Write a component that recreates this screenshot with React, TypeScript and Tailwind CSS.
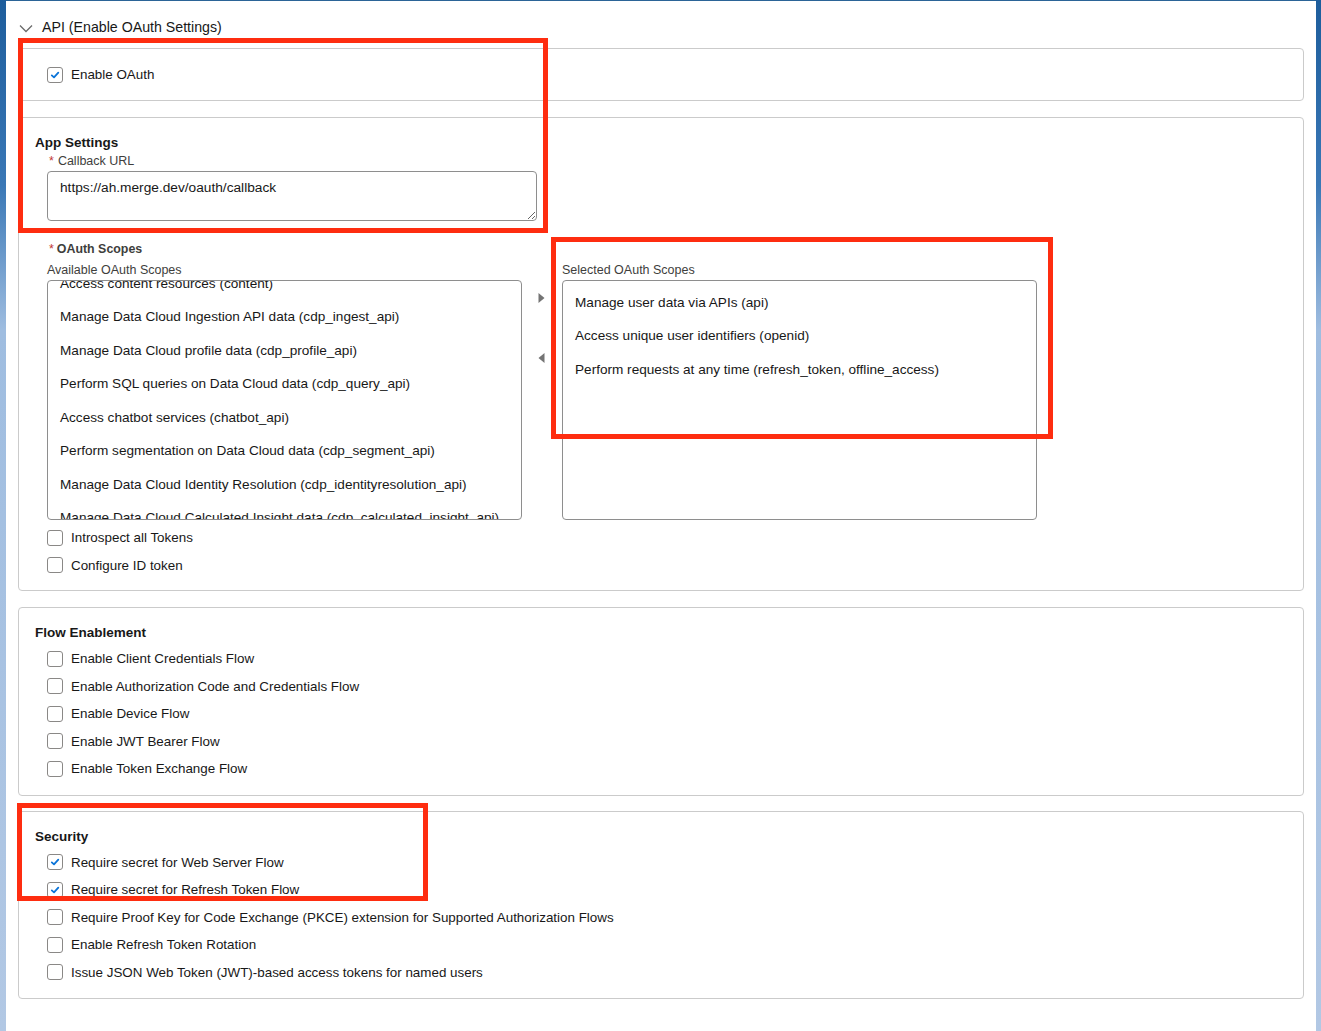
import React from "react";

const font = { fontFamily: '"Liberation Sans", Arial, sans-serif' };

function Check({ checked = false, label }: { checked?: boolean; label: string }) {
  return (
    <div className="flex items-center h-[27.5px] gap-2">
      <span className="w-4 h-4 rounded-[3px] border border-[#8a8886] bg-white flex items-center justify-center shrink-0">
        {checked && (
          <svg width="10" height="10" viewBox="0 0 10 10">
            <path d="M1.8 5.4 L4 7.4 L8.3 2.6" fill="none" stroke="#0b74d8" strokeWidth="1.8" strokeLinecap="round" strokeLinejoin="round" />
          </svg>
        )}
      </span>
      <span className="text-[13.4px] text-[#181818] leading-none whitespace-nowrap">{label}</span>
    </div>
  );
}

function Box({ children, className = "" }: { children: React.ReactNode; className?: string }) {
  return (
    <div className={"mx-3 border border-[#cbcbcb] rounded-[4px] bg-white " + className}>{children}</div>
  );
}

const available = [
  "Access content resources (content)",
  "Manage Data Cloud Ingestion API data (cdp_ingest_api)",
  "Manage Data Cloud profile data (cdp_profile_api)",
  "Perform SQL queries on Data Cloud data (cdp_query_api)",
  "Access chatbot services (chatbot_api)",
  "Perform segmentation on Data Cloud data (cdp_segment_api)",
  "Manage Data Cloud Identity Resolution (cdp_identityresolution_api)",
  "Manage Data Cloud Calculated Insight data (cdp_calculated_insight_api)",
];

const selected = [
  "Manage user data via APIs (api)",
  "Access unique user identifiers (openid)",
  "Perform requests at any time (refresh_token, offline_access)",
];

export default function App() {
  return (
    <div
      className="relative w-[1321px] h-[1031px] overflow-hidden flex bg-[linear-gradient(180deg,#1d5d9c_0%,#3a78b6_18%,#9fbde0_32%,#b2c8e4_100%)]"
      style={font}
    >
      <div className="ml-[6px] w-[1310px] h-full bg-white border-t border-[#2b6497] pt-[17px]">
        {/* header */}
        <div className="flex items-center h-5 pl-[13px] gap-[9px]">
          <svg width="14" height="9" viewBox="0 0 14 9">
            <path d="M1 1.5 L7 7.5 L13 1.5" fill="none" stroke="#6b6b6b" strokeWidth="1.3" />
          </svg>
          <span className="text-[14.2px] text-[#181818]">API (Enable OAuth Settings)</span>
        </div>

        {/* Box 1 */}
        <Box className="mt-[10px] h-[53px] flex items-center pl-[28px]">
          <Check checked label="Enable OAuth" />
        </Box>

        {/* Box 2 */}
        <Box className="mt-4 pt-[16px] pl-4 pb-[11px]">
          <div className="text-[13.5px] font-bold text-[#181818] leading-[18px]">App Settings</div>
          <div className="mt-[1px] pl-[14px] text-[12.5px] leading-4 text-[#3e3e3c] flex">
            <span className="text-[#c23934] mr-[4px]">*</span>Callback URL
          </div>
          <textarea
            readOnly
            defaultValue="https://ah.merge.dev/oauth/callback"
            className="mt-[2px] ml-3 block w-[490px] h-[50px] border border-[#8e8e8e] rounded-[4px] px-3 pt-[7px] text-[13.7px] leading-[18px] text-[#181818] outline-none"
            style={font}
          />
          <div className="mt-[20px] pl-[14px] text-[12.4px] leading-4 font-bold text-[#3e3e3c] flex">
            <span className="text-[#c23934] mr-[3px] font-normal">*</span>OAuth Scopes
          </div>
          <div className="mt-[5px] flex pl-3">
            <div>
              <div className="text-[12.5px] leading-4 text-[#3e3e3c]">Available OAuth Scopes</div>
              <div className="mt-[2px] w-[475px] h-[240px] border border-[#8e8e8e] rounded-[4px] overflow-hidden">
                <div className="-mt-[14px]">
                  {available.map((t) => (
                    <div key={t} className="h-[33.5px] flex items-center pl-3 text-[13.6px] text-[#181818] whitespace-nowrap">
                      {t}
                    </div>
                  ))}
                </div>
              </div>
            </div>
            <div className="w-[40px] flex flex-col items-center pt-[31px]">
              <svg width="7" height="10" viewBox="0 0 7 10" className="-ml-[1px]">
                <path d="M0.5 0 L6.5 5 L0.5 10 Z" fill="#747474" />
              </svg>
              <svg width="7" height="10" viewBox="0 0 7 10" className="mt-[50px] -ml-[1px]">
                <path d="M6.5 0 L0.5 5 L6.5 10 Z" fill="#747474" />
              </svg>
            </div>
            <div>
              <div className="text-[12.5px] leading-4 text-[#3e3e3c]">Selected OAuth Scopes</div>
              <div className="mt-[2px] w-[475px] h-[240px] border border-[#8e8e8e] rounded-[4px] overflow-hidden pt-[5px]">
                {selected.map((t) => (
                  <div key={t} className="h-[33.5px] flex items-center pl-3 text-[13.6px] text-[#181818] whitespace-nowrap">
                    {t}
                  </div>
                ))}
              </div>
            </div>
          </div>
          <div className="mt-[4px] pl-3">
            <Check label="Introspect all Tokens" />
            <Check label="Configure ID token" />
          </div>
        </Box>

        {/* Box 3 */}
        <Box className="mt-4 pt-[16px] pl-4 pb-[12px]">
          <div className="text-[13.5px] font-bold text-[#181818] leading-[18px]">Flow Enablement</div>
          <div className="mt-[3px] pl-3">
            <Check label="Enable Client Credentials Flow" />
            <Check label="Enable Authorization Code and Credentials Flow" />
            <Check label="Enable Device Flow" />
            <Check label="Enable JWT Bearer Flow" />
            <Check label="Enable Token Exchange Flow" />
          </div>
        </Box>

        {/* Box 4 */}
        <Box className="mt-[15px] pt-[16px] pl-4 pb-[12px]">
          <div className="text-[13.5px] font-bold text-[#181818] leading-[18px]">Security</div>
          <div className="mt-[3px] pl-3">
            <Check checked label="Require secret for Web Server Flow" />
            <Check checked label="Require secret for Refresh Token Flow" />
            <Check label="Require Proof Key for Code Exchange (PKCE) extension for Supported Authorization Flows" />
            <Check label="Enable Refresh Token Rotation" />
            <Check label="Issue JSON Web Token (JWT)-based access tokens for named users" />
          </div>
        </Box>
      </div>

      {/* annotation rectangles */}
      <div className="absolute left-[18px] top-[38px] w-[530px] h-[195px] border-[5px] border-[#fe2d10] pointer-events-none" />
      <div className="absolute left-[551px] top-[237px] w-[502px] h-[202px] border-[5px] border-[#fe2d10] pointer-events-none" />
      <div className="absolute left-[17px] top-[803px] w-[411px] h-[98px] border-[5px] border-[#fe2d10] pointer-events-none" />
    </div>
  );
}
